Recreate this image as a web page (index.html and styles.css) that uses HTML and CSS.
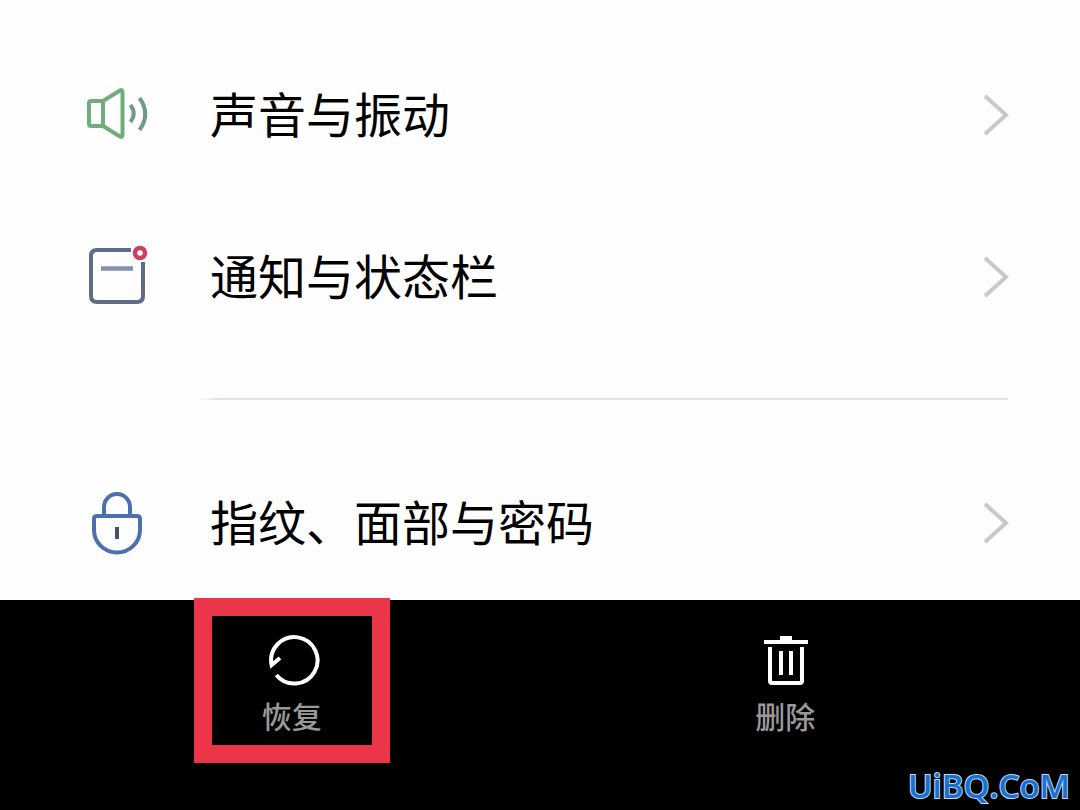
FILE: index.html
```html
<!DOCTYPE html>
<html lang="zh-CN">
  <head>
    <meta charset="utf-8">
    <meta name="viewport" content="width=device-width, initial-scale=1">
    <title>设置</title>
    <link rel="stylesheet" href="styles.css">
  </head>
  <body>
    <main class="settings">
      <a class="row" href="#sound">
        <svg class="icon" viewBox="0 0 70 70" fill="none" stroke-width="4" stroke-linejoin="round">
          <path stroke="#6fae7b" d="M21 21H9q-2 0-2 2v21q0 2 2 2h12M21 21v25M21 21L38 10.500q2.500-1.500 2.500 1.500v43q0 3-2.500 1.500L21 46"></path>
          <path stroke="#6f9a86" d="M48.500 25q6.500 8.500 0 17M57.500 18q11.500 16 0 32"></path>
        </svg>
        <span class="label">声音与振动</span>
        <svg class="chevron" viewBox="0 0 26 42"><path d="M1 2l21 19L1 40"></path></svg>
      </a>
      <a class="row" href="#notifications">
        <svg class="icon" viewBox="0 0 70 70" fill="none" stroke-width="4">
          <path stroke="#5f6b88" d="M49 8H15q-6 0-6 6v40q0 6 6 6h40q6 0 6-6V20"></path>
          <path stroke="#8590ae" stroke-width="4.500" d="M19 26.500h32"></path>
          <circle stroke="#cf405b" stroke-width="4.500" cx="58" cy="11" r="5"></circle>
        </svg>
        <span class="label">通知与状态栏</span>
        <svg class="chevron" viewBox="0 0 26 42"><path d="M1 2l21 19L1 40"></path></svg>
      </a>
      <hr class="divider">
      <a class="row" href="#security">
        <svg class="icon" viewBox="0 0 70 70" fill="none" stroke="#4c6fae" stroke-width="4">
          <path d="M22 28V19a13 13 0 0 1 26 0V28"></path>
          <path d="M15 28h40q3 0 3 3v11a23 22.500 0 0 1-46 0V31q0-3 3-3z"></path>
          <path stroke="#48506f" d="M35 39v12"></path>
        </svg>
        <span class="label">指纹、面部与密码</span>
        <svg class="chevron" viewBox="0 0 26 42"><path d="M1 2l21 19L1 40"></path></svg>
      </a>
    </main>
    <footer class="toolbar">
      <button class="action marked" type="button">
        <svg class="action-icon" viewBox="0 0 56 56" fill="none" stroke="#fff" stroke-width="4">
          <path d="M12.300 40.900A23.200 23.200 0 1 0 7.600 31L16 24"></path>
        </svg>
        <span>恢复</span>
      </button>
      <button class="action" type="button">
        <svg class="action-icon" viewBox="0 0 56 56" fill="none" stroke="#fff" stroke-width="4">
          <path d="M7 8h44M23 4h12"></path>
          <path d="M13 13v34q0 2 2 2h28q2 0 2-2V13M24 17v24M34 17v24"></path>
        </svg>
        <span>删除</span>
      </button>
      <span class="watermark">UiBQ.CoM</span>
    </footer>
  </body>
</html>
```
FILE: styles.css
```css
* {
  box-sizing: border-box;
}

body {
  margin: 0;
  min-height: 100vh;
  display: flex;
  flex-direction: column;
  background: #fefefe;
  color: #000;
  font-family: "Noto Sans CJK SC", sans-serif;
}

.settings {
  display: flex;
  flex-direction: column;
  gap: 8px;
  padding: 38px 70px 0 82px;
}

.row {
  display: flex;
  align-items: center;
  height: 154px;
  color: inherit;
  text-decoration: none;
}

.icon {
  width: 70px;
  height: 70px;
  flex: none;
}

.label {
  flex: 1;
  margin-left: 58px;
  padding-bottom: 6px;
  font-size: 48px;
  line-height: 56px;
}

.chevron {
  width: 26px;
  height: 42px;
  fill: none;
  stroke: #c8c8c8;
  stroke-width: 4px;
}

.divider {
  width: auto;
  height: 2px;
  margin: 36px 2px 38px 114px;
  border: 0;
  background: linear-gradient(to right, transparent, #e3e3e3 24px);
}

.toolbar {
  position: relative;
  flex: 1;
  display: grid;
  grid-template-columns: 1fr 1fr;
  justify-items: center;
  align-items: start;
  min-height: 210px;
  padding: 0 48px 0 45px;
  background: #000;
}

.action {
  display: flex;
  flex-direction: column;
  align-items: center;
  gap: 10px;
  width: 196px;
  height: 165px;
  margin-top: -2px;
  padding: 18px 0 0;
  border: 18px solid transparent;
  background: none;
  color: #999;
  font-family: inherit;
  font-size: 30px;
  font-weight: 500;
  line-height: 30px;
}

.marked {
  border-color: #eb3549;
}

.action-icon {
  width: 56px;
  height: 56px;
}

.watermark {
  position: absolute;
  right: 10px;
  bottom: 4px;
  color: #1c6fd0;
  font-family: "Open Sans", sans-serif;
  font-size: 33px;
  font-weight: 600;
  line-height: 40px;
  paint-order: stroke fill;
  -webkit-text-stroke: 2px #b9dcf7;
}
```
